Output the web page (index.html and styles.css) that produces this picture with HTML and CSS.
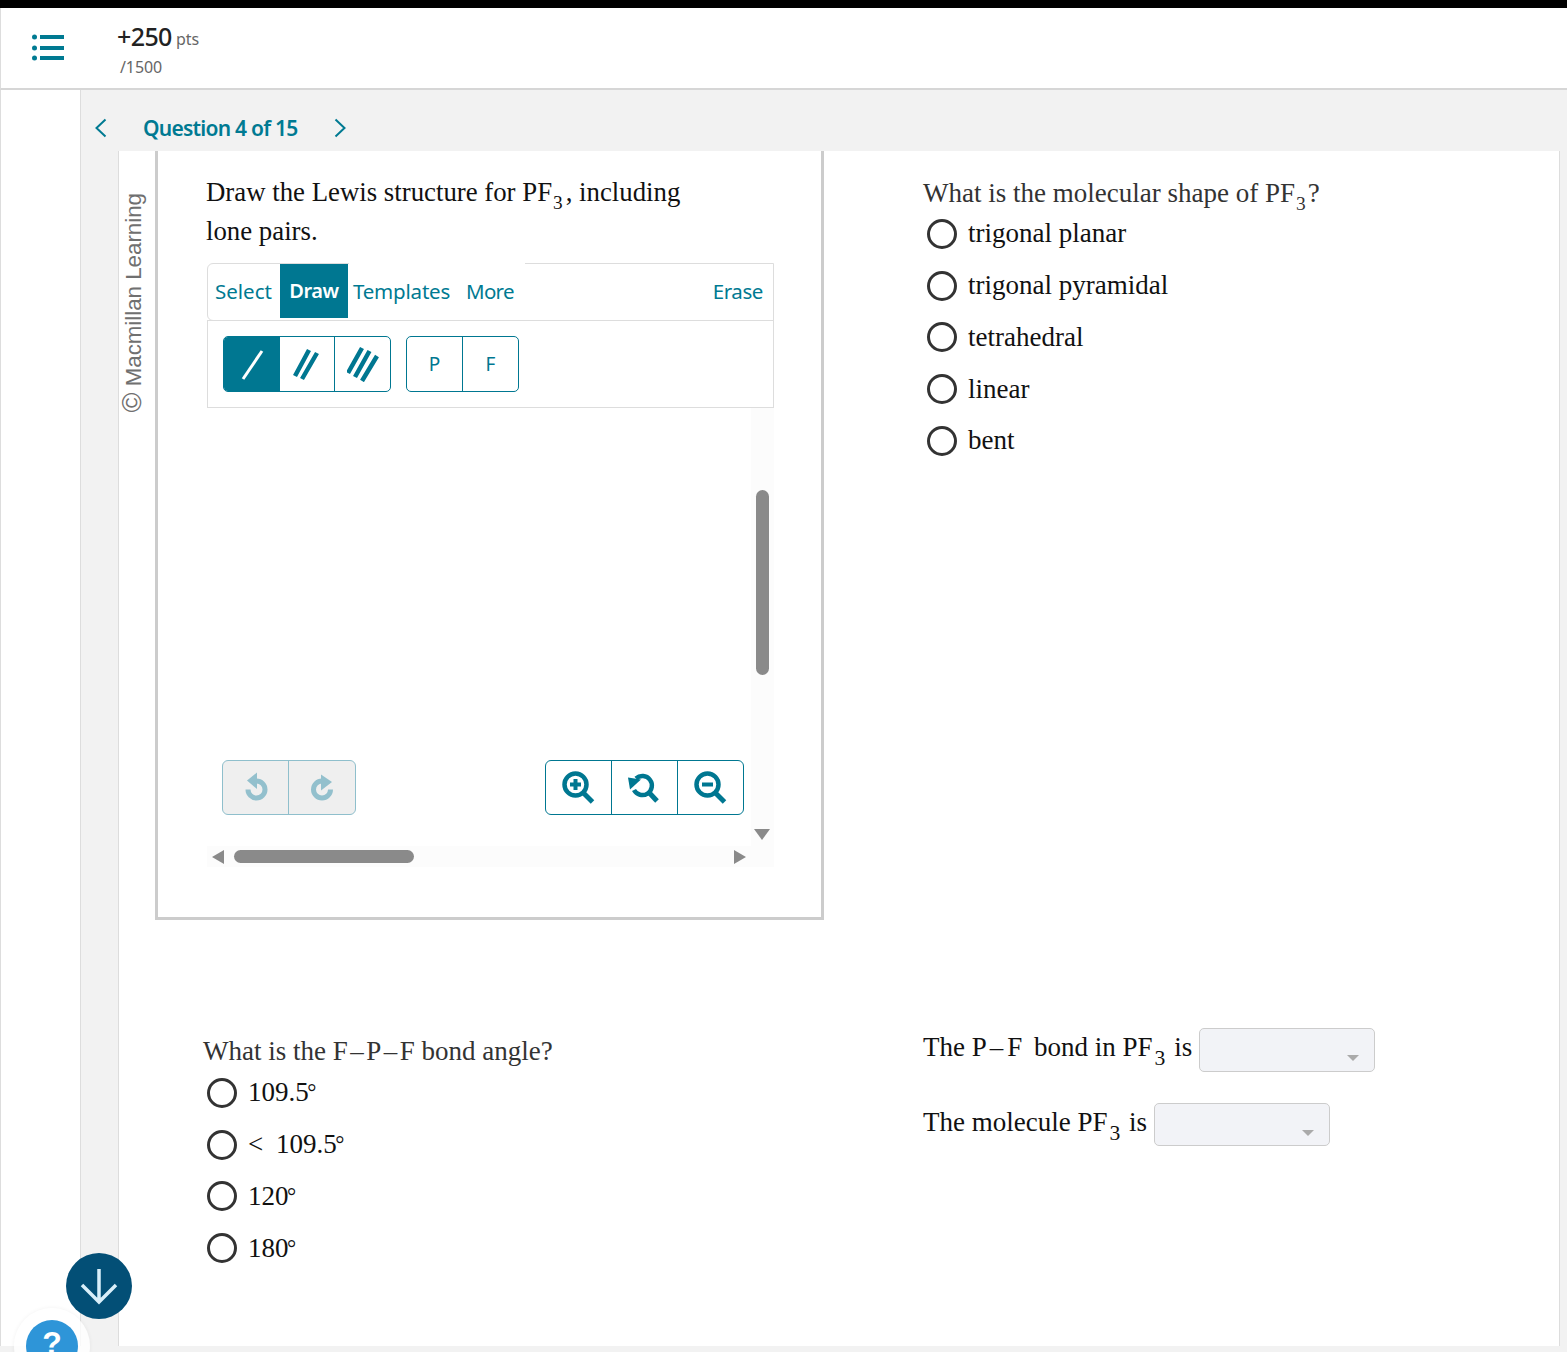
FILE: index.html
```html
<!DOCTYPE html>
<html lang="en">
<head>
<meta charset="utf-8">
<title>Question 4 of 15</title>
<link rel="stylesheet" href="styles.css">
</head>
<body>
<div class="page">
  <header class="topbar">
    <div class="menu-cell">
      <svg class="menu-icon" width="34" height="28" viewBox="0 0 34 28">
        <circle cx="2.500" cy="4" r="2.500"/><circle cx="2.500" cy="15" r="2.500"/><circle cx="2.500" cy="25" r="2.500"/>
        <rect x="8" y="2" width="24" height="4"/><rect x="8" y="13" width="24" height="4"/><rect x="8" y="23" width="24" height="4"/>
      </svg>
    </div>
    <div class="score">
      <div class="score-main"><span class="score-num">+250</span> <span class="score-unit">pts</span></div>
      <div class="score-total">/1500</div>
    </div>
  </header>

  <div class="body-row">
    <div class="side"></div>
    <main class="main">
      <nav class="qnav">
        <svg class="chev" width="14" height="20" viewBox="0 0 14 20"><path d="M11.500 1.500 2.500 10l9 8.500"/></svg>
        <span class="qtitle">Question 4 of 15</span>
        <svg class="chev" width="14" height="20" viewBox="0 0 14 20"><path d="M2.500 1.500l9 8.500-9 8.500"/></svg>
      </nav>

      <section class="card">
        <div class="rail"><span class="copyright"><span class="copy-mark">©</span> Macmillan Learning</span></div>
        <div class="content">
          <div class="sketch-box">
            <p class="prompt">Draw the Lewis structure for PF<sub>3</sub>, including<br>lone pairs.</p>
            <div class="sketcher">
              <div class="tabs">
                <span class="tab tab-select">Select</span>
                <span class="tab tab-draw">Draw</span>
                <span class="tab tab-templates">Templates</span>
                <span class="tab tab-more">More</span>
                <span class="tab tab-erase">Erase</span>
              </div>
              <div class="tools">
                <div class="btn-group">
                  <span class="tool tool-on tool-w1">
                    <svg width="30" height="36" viewBox="0 0 30 36"><path class="bond-on" d="M25 5 6 33"/></svg>
                  </span>
                  <span class="tool tool-w2">
                    <svg width="30" height="36" viewBox="0 0 30 36"><path class="bond" d="M17 4 3 30M25 7 10 33"/></svg>
                  </span>
                  <span class="tool tool-w3">
                    <svg width="32" height="36" viewBox="0 0 32 36"><path class="bond" d="M15 2 1 27M22.500 5 8 31M30 10 15 35"/></svg>
                  </span>
                </div>
                <div class="btn-group atoms">
                  <span class="tool atom">P</span>
                  <span class="tool atom">F</span>
                </div>
              </div>
              <div class="canvas">
                <div class="canvas-actions">
                  <div class="act-group act-disabled">
                    <span class="act">
                      <svg width="30" height="32" viewBox="0 0 30 32"><path class="undo-s" d="M15.500 9a8.500 8.500 0 1 1-8.500 8.500"/><path class="undo-f" d="M16 .5V17L6 8.500z"/></svg>
                    </span>
                    <span class="act">
                      <svg width="30" height="32" viewBox="0 0 30 32"><path class="undo-s" d="M15 9a8.500 8.500 0 1 0 8.500 8.500"/><path class="undo-f" d="M14 2.500v16L25 10z"/></svg>
                    </span>
                  </div>
                  <div class="act-group">
                    <span class="act">
                      <svg width="36" height="36" viewBox="1 0 36 36"><circle class="lens" cx="15.500" cy="14.500" r="11"/><path class="handle" d="M23.500 23l9 9"/><path class="sign" d="M15.500 9v11M10 14.500h11"/></svg>
                    </span>
                    <span class="act">
                      <svg width="36" height="36" viewBox="1 0 36 36"><path class="lens" d="M10 8.500a9.500 9.500 0 1 1-2 11.500"/><path class="handle" d="M23 22.500l8 8.500"/><path class="mark" d="M2 7.500 4 19.500 15 9.500z"/></svg>
                    </span>
                    <span class="act">
                      <svg width="36" height="36" viewBox="1 0 36 36"><circle class="lens" cx="15.500" cy="14.500" r="11"/><path class="handle" d="M23.500 23l9 9"/><path class="sign" d="M10 14.500h11"/></svg>
                    </span>
                  </div>
                </div>
                <div class="vbar">
                  <span class="vthumb"></span>
                  <svg class="vdown" width="16" height="12" viewBox="0 0 16 12"><path d="M0 1h16L8 12z"/></svg>
                </div>
                <div class="hbar">
                  <svg width="12" height="16" viewBox="0 0 12 16"><path d="M12 1v14L0 8z"/></svg>
                  <span class="hthumb"></span>
                  <svg class="hright" width="12" height="16" viewBox="0 0 12 16"><path d="M0 1v14l12-7z"/></svg>
                </div>
              </div>
            </div>
          </div>

          <div class="shape-q">
            <p class="q-text">What is the molecular shape of PF<sub>3</sub>?</p>
            <ul class="radios">
              <li><span class="radio"></span>trigonal planar</li>
              <li><span class="radio"></span>trigonal pyramidal</li>
              <li><span class="radio"></span>tetrahedral</li>
              <li><span class="radio"></span>linear</li>
              <li><span class="radio"></span>bent</li>
            </ul>
          </div>

          <div class="angle-q">
            <p class="q-text">What is the F<span class="dash">–</span>P<span class="dash">–</span>F bond angle?</p>
            <ul class="radios">
              <li><span class="radio"></span><span>109.5<span class="deg">°</span></span></li>
              <li><span class="radio"></span><span><span class="lt">&lt;</span> 109.5<span class="deg">°</span></span></li>
              <li><span class="radio"></span><span>120<span class="deg">°</span></span></li>
              <li><span class="radio"></span><span>180<span class="deg">°</span></span></li>
            </ul>
          </div>

          <div class="polar-q">
            <div class="inline-q"><span class="inline-text">The P<span class="dash-wide">–</span><span class="bond-f">F</span> bond in PF<sub>3</sub> is</span><span class="select"><i class="caret"></i></span></div>
            <div class="inline-q inline-q-short"><span class="inline-text">The molecule PF<sub>3</sub> is</span><span class="select"><i class="caret"></i></span></div>
          </div>
        </div>
      </section>
    </main>
  </div>
  <div class="bottom-strip"></div>

  <div class="help-halo"><span class="help">?</span></div>
  <div class="fab">
    <svg width="40" height="40" viewBox="0 0 40 40"><path d="M20 3v33M3 19l17 17 17-17"/></svg>
  </div>
</div>
</body>
</html>
```

FILE: styles.css
```css
* { box-sizing: border-box; }
html, body { margin: 0; padding: 0; }
body { background: #fff; font-family: "Liberation Serif", serif; color: #111; overflow: hidden; }
.page { position: relative; width: 1567px; height: 1352px; overflow: hidden; display: flex; flex-direction: column; border-top: 8px solid #000; }

.topbar { height: 82px; flex: none; display: flex; border-left: 1px solid #ddd; border-bottom: 2px solid #d6d6d6; }
.menu-cell { width: 116px; padding: 25px 0 0 31px; }
.menu-icon { fill: #007a92; display: block; }
.score { padding-top: 13px; font-family: "Noto Sans", sans-serif; }
.score-main { line-height: 30px; color: #222; }
.score-num { font-size: 25px; font-weight: 500; letter-spacing: -0.6px; }
.score-unit { font-size: 16px; color: #666; vertical-align: 1px; }
.score-total { font-size: 16px; color: #666; padding: 2px 0 0 3px; line-height: 20px; letter-spacing: -0.1px; }

.body-row { flex: 1; display: flex; min-height: 0; }
.side { width: 81px; flex: none; border-left: 1px solid #ddd; border-right: 1px solid #ddd; background: #fff; }
.main { flex: 1; background: #f2f2f2; display: flex; flex-direction: column; padding-right: 7px; }

.qnav { height: 61px; flex: none; display: flex; align-items: center; padding: 15px 0 0 13px; }
.chev { fill: none; stroke: #007a92; stroke-width: 2; }
.qtitle { margin: 0 35px; font-family: "Noto Sans", sans-serif; font-weight: 600; font-size: 21px; color: #007a92; letter-spacing: -0.75px; }

.card { flex: 1; margin-left: 37px; background: #fff; border-left: 1px solid #ddd; border-right: 1px solid #ddd; display: flex; min-height: 0; }
.rail { width: 36px; flex: none; display: flex; justify-content: center; padding: 42px 8px 0 0; align-items: flex-start; }
.copyright { writing-mode: vertical-rl; text-orientation: sideways; transform: rotate(180deg); font-family: "Liberation Sans", sans-serif; font-size: 22.300px; line-height: 24px; color: #707070; white-space: nowrap; }
.copy-mark { font-size: 27px; }

.content { flex: 1; display: grid; grid-template-columns: 669px 1fr; grid-template-rows: 769px 1fr; column-gap: 99px; }

.sketch-box { border: 3px solid #ccc; border-top: 0; padding: 22px 0 0 48px; }
.prompt { margin: 0; font-size: 26.800px; line-height: 39px; color: #111; width: 520px; }
.prompt sub { margin-right: 3px; }
sub { font-size: 0.72em; line-height: 0; vertical-align: -0.4em; margin: 0 2px 0 1px; }
.dash { margin: 0 2.500px; }
.dash-wide { margin: 0 4px 0 3px; }
.bond-f { margin-right: 5px; }
.deg { font-size: 0.85em; vertical-align: 0.05em; margin-left: -1.500px; }
.lt { margin-right: 6px; }

.sketcher { width: 567px; margin: 12px 0 0 1px; }
.tabs { height: 58px; padding-bottom: 2px; border: 1px solid #ddd; border-radius: 6px 0 0 6px; display: flex; align-items: center; font-family: "Noto Sans", sans-serif; font-size: 20.500px; color: #007a92; position: relative; letter-spacing: -0.2px; }
.tabs::before { content: ""; position: absolute; left: 141px; top: -1px; width: 176px; height: 2px; background: #fff; }
.tab { display: block; white-space: nowrap; }
.tab-select { margin-left: 7px; width: 65px; letter-spacing: 0; }
.tab-draw { background: #007791; color: #fff; width: 68px; height: 54px; line-height: 54px; text-align: center; font-weight: 600; font-size: 20px; letter-spacing: -0.4px; align-self: flex-start; }
.tab-templates { margin-left: 5px; width: 113px; }
.tab-more { width: 60px; letter-spacing: -0.7px; }
.tab-erase { margin-left: auto; margin-right: 10px; letter-spacing: -0.4px; }

.tools { height: 88px; margin-top: -1px; border: 1px solid #ddd; padding: 15px 0 0 15px; display: flex; gap: 15px; }
.btn-group { height: 56px; display: flex; border: 1px solid #007791; border-radius: 5px; overflow: hidden; }
.tool { display: flex; align-items: center; justify-content: center; height: 100%; }
.tool + .tool { border-left: 1px solid #007791; }
.tool-w1 { width: 56px; }
.tool-w2 { width: 55px; }
.tool-w3 { width: 56px; }
.tool-on { background: #007791; width: 55px; }
.bond { fill: none; stroke: #007791; stroke-width: 4.500; }
.bond-on { fill: none; stroke: #fff; stroke-width: 3; }
.atom { width: 55px; font-family: "Noto Sans", sans-serif; font-size: 19px; color: #007791; }
.atom + .atom { width: 56px; }
.atoms { width: 113px; }

.canvas { position: relative; height: 459px; padding: 352px 30px 0 15px; }
.canvas-actions { display: flex; justify-content: space-between; position: relative; z-index: 1; }
.act-group { height: 55px; display: flex; border: 1px solid #007791; border-radius: 6px; overflow: hidden; }
.act { width: 66px; display: flex; align-items: center; justify-content: center; }
.act:first-child { width: 65px; }
.act + .act { border-left: 1px solid #007791; }
.act-disabled { border-color: #8fbfcc; background: #efefef; }
.act-disabled .act { border-color: #8fbfcc; }
.act-disabled .act:last-child { width: 67px; }
.undo-s { fill: none; stroke: #93c0cd; stroke-width: 5; }
.undo-f { fill: #93c0cd; }
.lens { fill: none; stroke: #007791; stroke-width: 4.500; }
.handle { fill: none; stroke: #007791; stroke-width: 5; }
.sign { fill: none; stroke: #007791; stroke-width: 4; }
.mark { fill: #007791; }

.vbar { position: absolute; right: 0; top: 0; width: 23px; height: 438px; background: #fcfcfc; }
.vthumb { position: absolute; left: 5px; top: 82px; width: 13px; height: 185px; border-radius: 7px; background: #8a8a8a; }
.vdown { position: absolute; left: 3px; top: 420px; fill: #8a8a8a; }
.hbar { position: absolute; left: 0; right: 0; top: 438px; height: 21px; background: #fcfcfc; display: flex; align-items: center; padding: 0 28px 0 5px; }
.hbar svg { fill: #8a8a8a; flex: none; }
.hthumb { width: 180px; height: 13px; border-radius: 7px; background: #8a8a8a; margin-left: 10px; }
.hright { margin-left: auto; }

.shape-q { padding-top: 24px; }
.q-text { margin: 0; font-size: 27px; line-height: 36px; color: #333; }
.radios { list-style: none; margin: 0; padding: 0 0 0 4px; }
.radios li { height: 51.750px; display: flex; align-items: center; font-size: 27px; color: #111; }
.radio { width: 30px; height: 30px; border: 3px solid #333; border-radius: 50%; margin-right: 11px; flex: none; }
.shape-q .radios { margin-top: -2.900px; }

.angle-q { padding: 113px 0 0 48px; }
.angle-q .radios { margin-top: -1.900px; }

.polar-q { padding-top: 108px; }
.inline-q { display: flex; align-items: flex-start; height: 44px; font-size: 27px; margin-bottom: 31px; }
.inline-q-short { height: 43px; }
.inline-q sub { font-size: 0.8em; margin: 0 2px; }
.inline-text { line-height: 38px; white-space: nowrap; }
.select { position: relative; display: block; width: 176px; height: 100%; margin-left: 7px; background: #f2f3f7; border: 1px solid #ccc; border-radius: 5px; }
.caret { position: absolute; right: 15px; top: 26px; border: 6px solid transparent; border-top: 6px solid #aaa; border-bottom: 0; }

.bottom-strip { height: 6px; flex: none; background: #f2f2f2; }

.fab { position: absolute; left: 66px; top: 1245px; width: 66px; height: 66px; border-radius: 50%; background: #034f76; display: flex; align-items: center; justify-content: center; }
.fab svg { fill: none; stroke: #d9effa; stroke-width: 3.500; }
.help-halo { position: absolute; left: 14px; top: 1300px; width: 76px; height: 76px; border-radius: 50%; background: rgba(255,255,255,.8); box-shadow: 0 0 4px rgba(0,0,0,.06); display: flex; align-items: center; justify-content: center; }
.help { width: 52px; height: 52px; border-radius: 50%; background: #2e95d8; color: #fff; font-family: "Liberation Sans", sans-serif; font-weight: 700; font-size: 32px; line-height: 46px; text-align: center; }
```
